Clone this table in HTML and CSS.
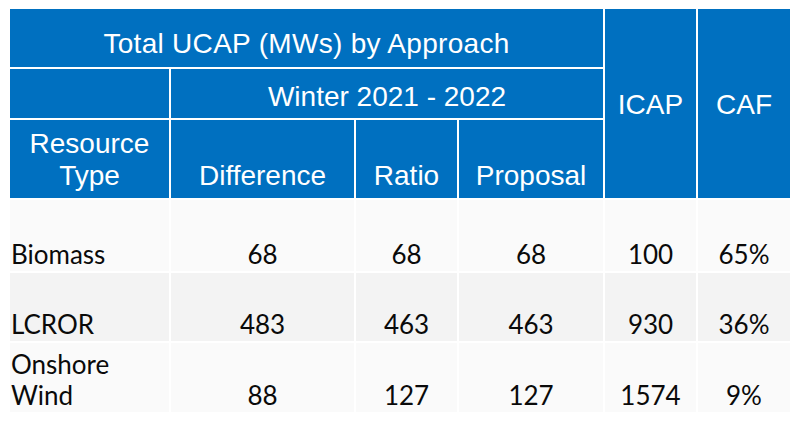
FILE: index.html
```html
<!DOCTYPE html>
<html lang="en">
<head>
<meta charset="utf-8">
<title>Total UCAP by Approach</title>
<link rel="stylesheet" href="styles.css">
</head>
<body>
<table class="ucap">
  <colgroup>
    <col class="c-type">
    <col class="c-diff">
    <col class="c-ratio">
    <col class="c-prop">
    <col class="c-icap">
    <col class="c-caf">
  </colgroup>
  <thead>
    <tr class="h1">
      <th colspan="4" class="title">Total UCAP (MWs) by Approach</th>
      <th rowspan="3" class="mid">ICAP</th>
      <th rowspan="3" class="mid">CAF</th>
    </tr>
    <tr class="h2">
      <th></th>
      <th colspan="3">Winter 2021 - 2022</th>
    </tr>
    <tr class="h3">
      <th>Resource<br>Type</th>
      <th>Difference</th>
      <th>Ratio</th>
      <th>Proposal</th>
    </tr>
  </thead>
  <tbody>
    <tr class="r1 odd">
      <td class="name">Biomass</td>
      <td>68</td><td>68</td><td>68</td><td>100</td><td>65%</td>
    </tr>
    <tr class="r2 even">
      <td class="name">LCROR</td>
      <td>483</td><td>463</td><td>463</td><td>930</td><td>36%</td>
    </tr>
    <tr class="r3 odd">
      <td class="name">Onshore<br>Wind</td>
      <td>88</td><td>127</td><td>127</td><td>1574</td><td>9%</td>
    </tr>
  </tbody>
</table>
</body>
</html>
```

FILE: styles.css
```css
html, body {
  margin: 0;
  padding: 0;
  background: #ffffff;
}
body {
  padding: 7px 8px;
}
.ucap {
  border-collapse: separate;
  border-spacing: 2px;
  table-layout: fixed;
  width: 784px;
}
.c-type { width: 159px; }
.c-diff { width: 183px; }
.c-ratio { width: 101px; }
.c-prop { width: 144px; }
.c-icap { width: 91px; }
.c-caf { width: 92px; }

.ucap th {
  background: #0070c0;
  color: #ffffff;
  font-family: "Liberation Sans", Arial, sans-serif;
  font-weight: normal;
  font-size: 28px;
  line-height: 32px;
  text-align: center;
  vertical-align: bottom;
  padding: 0;
}
.ucap th.title {
  letter-spacing: 0.3px;
}
.ucap th.mid {
  vertical-align: middle;
  padding-top: 2px;
}
.h1 { height: 58px; }
.h2 { height: 49px; }
.h3 { height: 78px; }
.h1 th.title { padding-bottom: 7px; }
.h2 th { padding-bottom: 5px; }
.h3 th { padding-bottom: 6px; }

.ucap td {
  font-family: Lato, "Open Sans", sans-serif;
  font-size: 26px;
  line-height: 31px;
  color: #0a0a0a;
  text-align: center;
  vertical-align: bottom;
  padding: 0 0 1px 0;
}
.ucap td.name {
  text-align: left;
  padding-left: 1px;
}
.odd td { background: #fafafa; }
.even td { background: #f3f3f3; }
.r1 { height: 71px; }
.r2 { height: 68px; }
.r3 { height: 69px; }
```
